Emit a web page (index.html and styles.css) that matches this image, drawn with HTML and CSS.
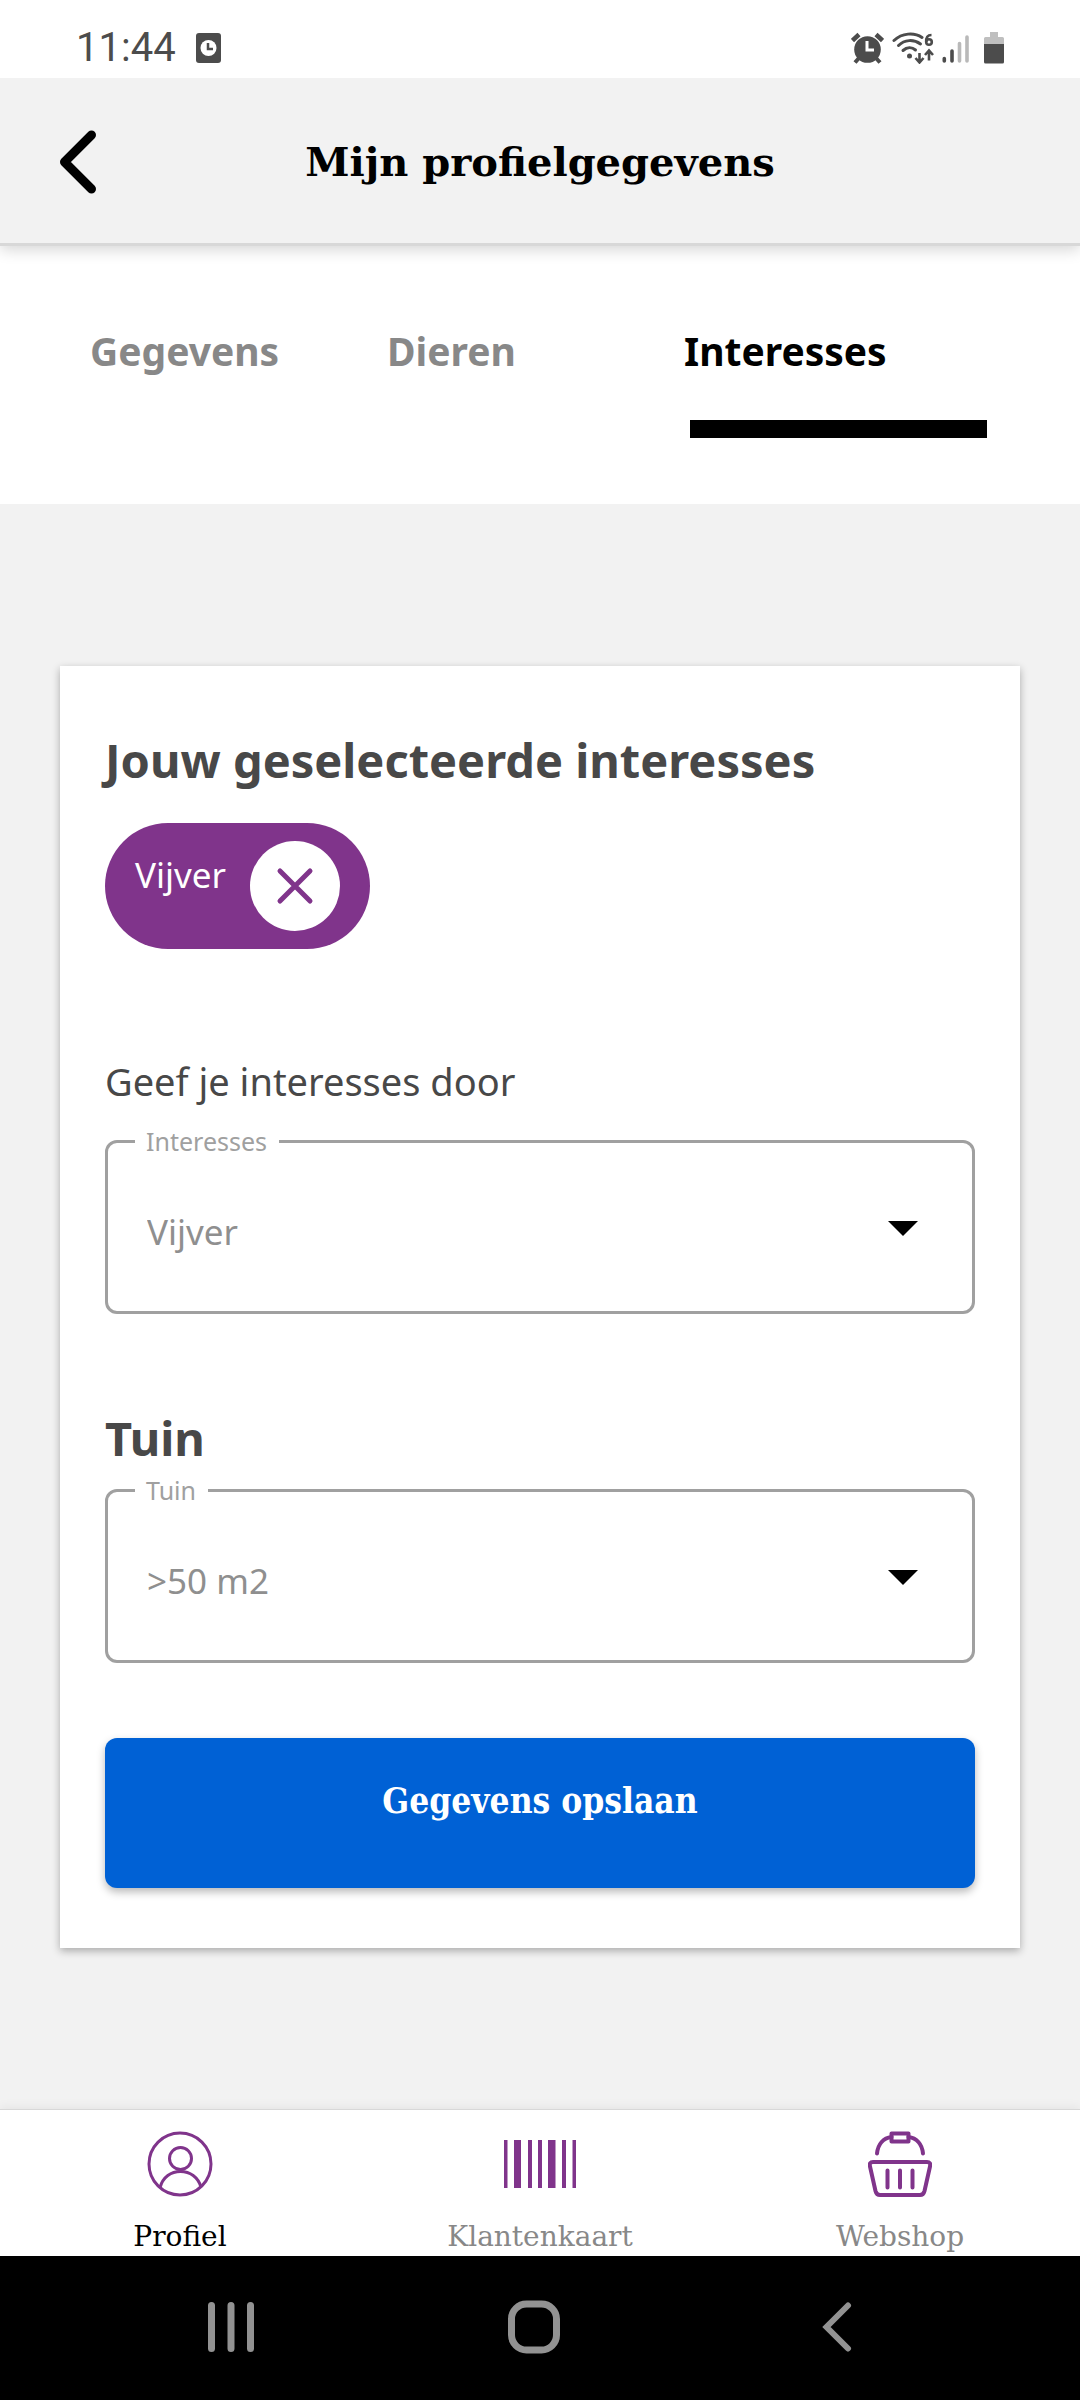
FILE: index.html
```
<!DOCTYPE html>
<html lang="nl">
<head>
<meta charset="utf-8">
<meta name="viewport" content="width=device-width, initial-scale=1">
<title>Mijn profielgegevens</title>
<link rel="stylesheet" href="styles.css">
</head>
<body>
<div class="statusbar">
  <div class="status-group">
    <span class="clock">11:44</span>
    <svg class="status-app" width="25" height="30" viewBox="0 0 25 30" aria-hidden="true">
      <rect width="25" height="30" rx="3" fill="#4c4c4c"/>
      <circle cx="12.500" cy="15" r="8" fill="#fff"/>
      <path d="M12 10v6h5" fill="none" stroke="#4c4c4c" stroke-width="2.500"/>
    </svg>
  </div>
  <div class="status-icons">
    <svg width="33" height="32" viewBox="0 0 33 32" aria-hidden="true">
      <g stroke="#4c4c4c" stroke-width="4.500" fill="none">
        <path d="M1.500 8.500 8 2.500M31.500 8.500 25 2.500"/>
        <path d="M4 30.500 8 26M29 30.500 25 26" stroke-width="4"/>
      </g>
      <circle cx="16.500" cy="17.500" r="13.300" fill="#4c4c4c"/>
      <path d="M16 9v9h7" fill="none" stroke="#fff" stroke-width="3"/>
    </svg>
    <svg width="42" height="32" viewBox="0 0 42 32" aria-hidden="true">
      <g fill="none" stroke="#4c4c4c" stroke-width="3" stroke-linecap="round">
        <path d="M2 8.500C10 1 22 0 30 5.500"/>
        <path d="M6.500 13.500c6-6 15-6.500 22-1.500"/>
        <path d="M11 18.500c4-3.500 9-3.500 12.500-.5"/>
      </g>
      <circle cx="17.500" cy="24" r="2.500" fill="#4c4c4c"/>
      <g fill="none" stroke="#4c4c4c" stroke-width="2.600">
        <path d="M27.500 21v9M23.500 26l4 4.500 4-4.500"/>
        <path d="M37 28.500V19M33 23l4-4.500 4 4.500"/>
        <circle cx="37" cy="10" r="2.800"/>
        <path d="M34.200 10C34 5.500 35.500 3 39.500 3"/>
      </g>
    </svg>
    <svg width="28" height="32" viewBox="0 0 28 32" aria-hidden="true">
      <g stroke-width="3.600" stroke-linecap="round">
        <path d="M2.300 26.500v2.500M10 19v10" stroke="#4c4c4c"/>
        <path d="M17.500 11.500V29M25 5v24" stroke="#b9b9b9"/>
      </g>
    </svg>
    <svg class="battery" width="20" height="32" viewBox="0 0 20 32" aria-hidden="true">
      <path d="M6 0h8v5h4.500Q20 5 20 6.500V13H0V6.500Q0 5 1.500 5H6z" fill="#bfbfbf"/>
      <path d="M0 12h20v18q0 1.500-1.500 1.500h-17Q0 31.500 0 30z" fill="#4c4c4c"/>
    </svg>
  </div>
</div>

<header class="appbar">
  <button class="back" type="button" aria-label="Terug">
    <svg width="38" height="66" viewBox="0 0 38 66" aria-hidden="true">
      <path d="M32.500 6 5.500 33l27 27" fill="none" stroke="#000" stroke-width="9" stroke-linecap="round" stroke-linejoin="round"/>
    </svg>
  </button>
  <h1 class="title">Mijn profielgegevens</h1>
</header>

<nav class="tabs" aria-label="Profiel">
  <a class="tab" href="#gegevens">Gegevens</a>
  <a class="tab" href="#dieren">Dieren</a>
  <a class="tab tab-active" href="#interesses" aria-current="page">Interesses</a>
</nav>

<main class="content">
  <form class="card">
    <h2 class="heading">Jouw geselecteerde interesses</h2>
    <div class="chip">
      <span class="chip-label">Vijver</span>
      <button class="chip-remove" type="button" aria-label="Vijver verwijderen">
        <svg width="38" height="38" viewBox="0 0 38 38" aria-hidden="true">
          <path d="M4 4 34 34M34 4 4 34" stroke="#80348b" stroke-width="5" stroke-linecap="round"/>
        </svg>
      </button>
    </div>
    <p class="intro">Geef je interesses door</p>
    <div class="field">
      <label class="field-label" for="interest">Interesses</label>
      <select class="field-select" id="interest">
        <option>Vijver</option>
      </select>
      <svg class="field-arrow" width="30" height="15" viewBox="0 0 30 15" aria-hidden="true"><path d="M0 0h30L15 15z"/></svg>
    </div>
    <h2 class="heading heading-garden">Tuin</h2>
    <div class="field">
      <label class="field-label" for="garden">Tuin</label>
      <select class="field-select" id="garden">
        <option>&gt;50 m2</option>
      </select>
      <svg class="field-arrow" width="30" height="15" viewBox="0 0 30 15" aria-hidden="true"><path d="M0 0h30L15 15z"/></svg>
    </div>
    <button class="save" type="button">Gegevens opslaan</button>
  </form>
</main>

<nav class="bottomnav" aria-label="Hoofdmenu">
  <a class="nav-item nav-active" href="#profiel">
    <svg width="66" height="66" viewBox="0 0 66 66" fill="none" stroke="#80348b" stroke-width="3" aria-hidden="true">
      <circle cx="33" cy="33" r="31"/>
      <circle cx="33.500" cy="27.500" r="11"/>
      <path d="M13 56.500C16 46 24 40.500 33.500 40.500S51 46 54 56"/>
    </svg>
    <span>Profiel</span>
  </a>
  <a class="nav-item" href="#klantenkaart">
    <svg width="72" height="66" viewBox="0 0 72 66" fill="#80348b" aria-hidden="true">
      <path d="M0 9h3.500v48H0zM10 9h7v48h-7zM24 9h4v48h-4zM34 9h4v48h-4zM44 9h7.500v48H44zM58 9h4v48h-4zM68.500 9H72v48h-3.500z"/>
    </svg>
    <span>Klantenkaart</span>
  </a>
  <a class="nav-item" href="#webshop">
    <svg width="64" height="66" viewBox="0 0 64 66" fill="none" stroke="#80348b" stroke-width="4" stroke-linecap="round" stroke-linejoin="round" aria-hidden="true">
      <path d="M23.500 2.500h17v8h-17z"/>
      <path d="M9 22.500C10 13 15.500 7 23.500 6M55 22.500C54 13 48.500 7 40.500 6"/>
      <path d="M5 31h54q4 0 3 4.500L56.500 60Q55.500 64 52 64H12Q8.500 64 7.500 60L2 35.500Q1 31 5 31z"/>
      <path d="M19.500 39.500v17M32 39.500v17M44.500 39.500v17"/>
    </svg>
    <span>Webshop</span>
  </a>
</nav>

<div class="systembar">
  <button class="sys" type="button" aria-label="Recente apps">
    <svg width="46" height="54" viewBox="0 0 46 54" aria-hidden="true">
      <path d="M3.500 5.500v43M23 5.500v43M42.500 5.500v43" stroke="#929292" stroke-width="7" stroke-linecap="round"/>
    </svg>
  </button>
  <button class="sys" type="button" aria-label="Startscherm">
    <svg width="54" height="54" viewBox="0 0 54 54" aria-hidden="true">
      <rect x="4.500" y="4" width="45" height="46" rx="15" fill="none" stroke="#929292" stroke-width="7"/>
    </svg>
  </button>
  <button class="sys" type="button" aria-label="Terug">
    <svg width="30" height="54" viewBox="0 0 30 54" aria-hidden="true">
      <path d="M26 5.500 4.500 27 26 48.500" fill="none" stroke="#929292" stroke-width="6" stroke-linecap="round"/>
    </svg>
  </button>
</div>
</body>
</html>
```

FILE: styles.css
```
* {
  box-sizing: border-box;
}

body {
  margin: 0;
  min-height: 100vh;
  display: flex;
  flex-direction: column;
  background: #f2f2f2;
  color: #484848;
  font-family: "Noto Sans", "Open Sans", sans-serif;
}

button {
  border: 0;
  padding: 0;
  background: none;
  font: inherit;
  cursor: pointer;
}

a {
  color: inherit;
  text-decoration: none;
}

svg {
  display: block;
  flex: none;
}

/* Status bar */
.statusbar {
  position: relative;
  z-index: 2;
  display: flex;
  justify-content: space-between;
  align-items: center;
  height: 78px;
  padding: 18px 76px 0;
  background: #fff;
}

.status-group,
.status-icons {
  display: flex;
  align-items: center;
}

.status-group {
  gap: 20px;
}

.status-icons {
  gap: 8px;
}

.clock {
  color: #4c4c4c;
  font-family: Roboto, sans-serif;
  font-size: 40px;
  font-weight: 400;
  line-height: 48px;
}

.battery {
  margin-left: 6px;
}

/* App bar */
.appbar {
  position: relative;
  z-index: 1;
  display: grid;
  grid-template-columns: 120px 1fr 120px;
  align-items: center;
  height: 168px;
  padding-top: 2px;
  border-bottom: 3px solid #d8d8d8;
  background: #f2f2f2;
  box-shadow: 0 4px 14px rgba(0, 0, 0, 0.16);
}

.back {
  justify-self: start;
  margin-left: 59px;
}

.title {
  margin: 0;
  color: #000;
  font-family: "DejaVu Serif", serif;
  font-size: 40px;
  font-weight: 700;
  line-height: 60px;
  text-align: center;
}

/* Tabs */
.tabs {
  display: grid;
  grid-template-columns: repeat(3, 1fr);
  padding: 76px 93px 66px 96px;
  background: #fff;
}

.tab {
  height: 116px;
  color: #888;
  font-size: 39px;
  font-weight: 700;
  line-height: 58px;
  text-indent: -6px;
}

.tab-active {
  border-bottom: 18px solid #000;
  color: #000;
}

/* Card */
.content {
  flex: 1;
  padding: 162px 60px 160px;
}

.card {
  display: flex;
  flex-direction: column;
  padding: 64px 45px 60px;
  background: #fff;
  box-shadow: 0 3px 8px rgba(0, 0, 0, 0.3);
}

.heading {
  margin: 0;
  font-size: 47px;
  font-weight: 700;
  line-height: 60px;
}

.heading-garden {
  margin: 94px 0 21px;
}

.chip {
  align-self: flex-start;
  display: flex;
  gap: 24px;
  margin-top: 33px;
  padding: 18px 30px;
  border-radius: 63px;
  background: #80348b;
}

.chip-label {
  color: #fff;
  font-size: 35px;
  line-height: 68px;
}

.chip-remove {
  display: grid;
  place-items: center;
  width: 90px;
  height: 90px;
  border-radius: 50%;
  background: #fff;
}

.intro {
  margin: 104px 0 31px;
  font-size: 38px;
  line-height: 56px;
}

.field {
  position: relative;
}

.field-label {
  position: absolute;
  top: -17px;
  left: 30px;
  padding: 0 12px 0 11px;
  background: #fff;
  color: #a0a0a0;
  font-size: 25px;
  line-height: 36px;
}

.field-select {
  display: block;
  width: 100%;
  height: 174px;
  padding: 8px 90px 0 39px;
  border: 3px solid #a0a0a0;
  border-radius: 12px;
  appearance: none;
  background: #fff;
  color: #8f8f8f;
  font: inherit;
  font-size: 35px;
}

.field-arrow {
  position: absolute;
  top: 81px;
  right: 57px;
  pointer-events: none;
}

.save {
  height: 150px;
  margin-top: 75px;
  padding-bottom: 26px;
  border-radius: 12px;
  background: #0061d5;
  box-shadow: 0 4px 8px rgba(0, 0, 0, 0.28);
  color: #fff;
  font-family: "DejaVu Serif Condensed", "DejaVu Serif", serif;
  font-size: 35px;
  font-weight: 700;
}

/* Bottom navigation */
.bottomnav {
  display: grid;
  grid-template-columns: repeat(3, 1fr);
  height: 147px;
  padding-top: 21px;
  border-top: 1px solid #d8d8d8;
  background: #fff;
  box-shadow: 0 -2px 10px rgba(0, 0, 0, 0.06);
}

.nav-item {
  display: flex;
  flex-direction: column;
  align-items: center;
  gap: 20px;
  color: #888;
  font-family: "DejaVu Serif", serif;
  font-size: 28px;
  line-height: 40px;
}

.nav-active {
  color: #000;
}

/* System navigation */
.systembar {
  display: flex;
  justify-content: space-between;
  align-items: center;
  height: 144px;
  padding: 0 216px 2px 204px;
  background: #000;
}

.sys {
  display: grid;
  place-items: center;
  width: 54px;
}
```
